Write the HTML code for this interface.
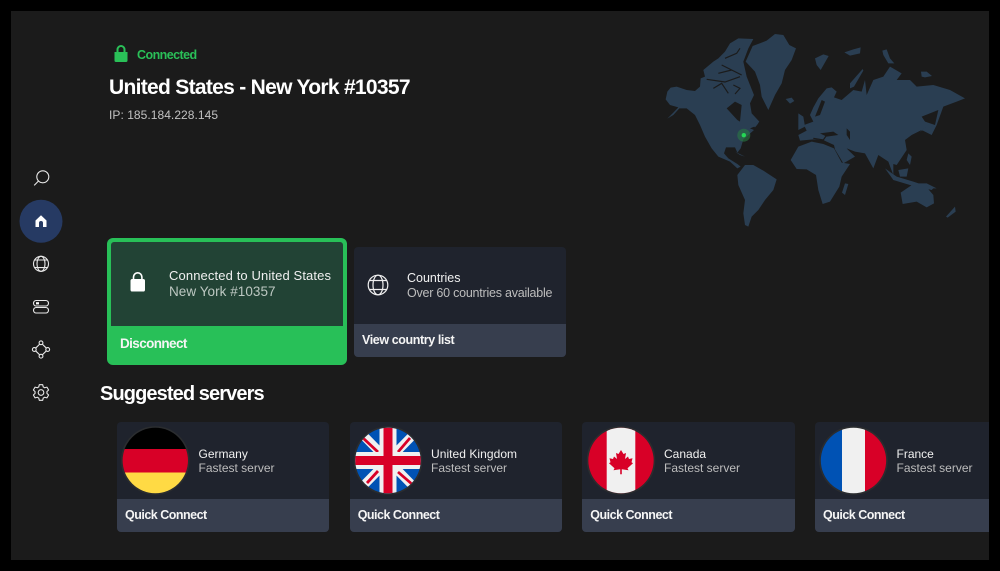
<!DOCTYPE html>
<html><head><meta charset="utf-8"><style>
html,body{margin:0;padding:0;background:#000}
#f{position:relative;width:1000px;height:571px;overflow:hidden;background:#000;font-family:"Liberation Sans",sans-serif;color:#fff}
#b{position:absolute;left:11px;top:11px;width:978px;height:549px;background:#1b1b1b}
.t{position:absolute;white-space:nowrap;line-height:1}
.c{position:absolute;border-radius:4px;overflow:hidden;background:#1f232d}
.c i{position:absolute;left:0;right:0;bottom:0;height:33px;background:#373e4e}
.n{font-size:12px;color:#f0f0f0}
.s{font-size:12px;color:#bdbdbd}
.q{font-size:12.5px;font-weight:bold;color:#f5f5f5;letter-spacing:-.5px}
svg{position:absolute;left:0;top:0}
</style></head><body><div id="f"><div id="b"></div>

<svg width="1000" height="571" viewBox="0 0 1000 571">
<g transform="translate(650 20) scale(.33333)" fill="#2a3e52">
<path d="M47,238L52,215L62,203L80,200L110,210L135,213L150,200L152,175L165,170L160,150L190,125L205,115L225,95L240,70L265,55L310,57L295,85L280,125L290,170L300,195L312,225L300,250L305,280L328,305L318,318L300,325L312,330L295,345L280,358L272,385L262,398L255,382L228,382L222,400L235,415L262,432L272,440L262,445L240,425L205,410L185,385L165,350L150,315L135,285L110,265L88,265L70,285L52,296L70,278L85,262L60,255Z"/>
<path d="M287,125L308,78L350,62L375,42L400,45L418,75L438,85L425,120L405,150L395,190L375,225L355,270L335,230L330,195L315,155Z"/>
<path d="M407,237L425,233L433,243L420,251Z M495,115L520,103L536,108L512,150L500,135Z M583,97L610,88L632,82L630,100L600,107Z M697,92L710,88L720,115L733,130L715,130L700,105Z M813,155L830,155L846,168L825,172L815,170Z M600,190L638,147L640,152L612,200L600,205Z"/>
<path d="M262,465L285,435L310,435L340,452L380,478L370,510L345,540L325,570L305,590L295,620L285,615L280,580L285,540L265,495Z"/>
<path d="M422,420L445,380L485,365L520,372L552,385L575,428L600,432L575,470L568,500L540,545L518,552L505,510L498,465L470,448L440,447Z"/>
<path d="M445,345L470,332L462,315L490,305L480,285L490,262L505,235L530,205L545,202L560,215L552,232L575,240L610,210L635,215L645,180L650,225L670,180L700,170L720,140L755,160L740,180L780,180L800,200L850,195L900,210L945,235L920,245L880,260L860,315L845,345L815,330L785,345L765,360L770,390L740,435L730,432L730,465L715,425L685,405L670,445L645,400L615,395L590,385L615,410L580,430L555,388L552,375L530,365L520,360L490,358L450,362Z"/>
<path d="M585,490L595,492L585,525L576,518Z M752,518L790,492L820,490L850,525L852,550L830,562L800,545L758,552Z M888,590L915,560L917,575L893,593Z M445,280L460,290L465,320L445,330Z M862,265L870,285L845,320L810,335L835,315Z M705,445L740,470L790,485L850,505L845,510L780,495L730,480Z M745,450L775,445L770,470L750,470Z M800,490L830,490L860,505L830,505Z M775,400L785,410L780,435L770,420Z M255,395L285,410L270,405Z M305,312L325,310L315,322Z"/>
</g>
<g transform="translate(650 20) scale(.33333)" fill="#1b1b1b">
<path d="M230,265L255,245L275,255L270,305L262,300Z M815,290L865,270L855,315L825,305Z M510,340L550,335L565,345L530,350Z M590,325L600,335L600,360L590,345Z M515,240L525,245L510,285L495,290L505,265Z M590,385L615,405L600,395Z"/>
</g>
<g transform="translate(650 20) scale(.33333)" fill="none" stroke="#1b1b1b" stroke-width="3.500">
<path d="M170,178L225,186L270,170M215,135L275,165M250,195L270,205L255,222M190,205L215,190L235,220M225,115L260,100L270,85M205,160L245,150"/>
<path d="M490,355L520,360L530,345"/>
</g>
<circle cx="743.800" cy="135.200" r="6.500" fill="#2a7a45" opacity=".6"/><circle cx="743.800" cy="135.200" r="2.200" fill="#25d855"/>

<!-- status lock -->
<path d="M114.500 52h13v8.500a1.500 1.500 0 0 1-1.500 1.500h-10a1.500 1.500 0 0 1-1.500-1.500z" fill="#2ac058"/>
<path d="M117.500 52v-2.500a3.500 3.500 0 0 1 7 0V52" fill="none" stroke="#2ac058" stroke-width="2"/>

<!-- sidebar -->
<circle cx="41" cy="221.300" r="21.500" fill="#263a63"/>
<path d="M35.500 227v-6.500L41 215.200l5.500 5.300V227h-3.500v-4a2 2 0 0 0-4 0v4z" fill="#fff"/>
<g fill="none" stroke="#e8e8e8" stroke-width="1.100" stroke-linejoin="round">
<circle cx="42.800" cy="176.800" r="6"/><path d="M38.500 181L34.200 185.400"/>
<circle cx="41" cy="263.800" r="7.500"/><ellipse cx="41" cy="263.800" rx="4" ry="7.500"/><path d="M34.500 260h13M34.500 267.600h13"/>
<rect x="33.500" y="300.500" width="15" height="5.500" rx="2.700"/><rect x="33.500" y="307.500" width="15" height="5.500" rx="2.700"/>
<circle cx="41" cy="342.800" r="1.900"/><circle cx="41" cy="356.200" r="1.900"/><circle cx="34.300" cy="349.500" r="1.900"/><circle cx="47.700" cy="349.500" r="1.900"/>
<path d="M39.700 344.100L35.600 348.200M42.300 344.100L46.400 348.200M39.700 354.900L35.600 350.800M42.300 354.900L46.400 350.800"/>
<circle cx="41" cy="392.500" r="2.800"/>
<path d="M43.250 386.940L42.660 384.670H39.340L38.750 386.940L37.310 387.770L35.050 387.150L33.390 390.030L35.060 391.660V393.340L33.390 394.970L35.050 397.850L37.310 397.230L38.750 398.060L39.340 400.330H42.660L43.250 398.060L44.690 397.230L46.950 397.850L48.610 394.970L46.940 393.340V391.660L48.610 390.030L46.950 387.150L44.690 387.770Z"/>
</g>
<rect x="36" y="302.200" width="3" height="2.200" fill="#fff"/>
</svg>

<div class="t" style="left:137px;top:49px;font-size:12.500px;font-weight:bold;color:#2ac058;letter-spacing:-.55px">Connected</div>
<div class="t" style="left:109px;top:77px;font-size:21px;font-weight:bold;letter-spacing:-.7px">United States - New York #10357</div>
<div class="t" style="left:109px;top:109px;font-size:12px;color:#c2c2c2;letter-spacing:.05px">IP: 185.184.228.145</div>

<div style="position:absolute;left:107px;top:238px;width:240px;height:127px;background:#28c058;border-radius:6px"></div>
<div style="position:absolute;left:111px;top:242px;width:232px;height:84px;background:#224335;border-radius:3px 3px 0 0"></div>
<svg width="1000" height="571" viewBox="0 0 1000 571">
<rect x="130.500" y="279" width="14.500" height="12.500" rx="1.800" fill="#fff"/>
<path d="M133.500 279.500v-2.500a4.200 4.200 0 0 1 8.400 0v2.500" fill="none" stroke="#fff" stroke-width="1.600"/>
</svg>
<div class="t" style="left:169px;top:269px;font-size:13px;color:#f0f0f0;letter-spacing:.12px">Connected to United States</div>
<div class="t" style="left:169px;top:285px;font-size:13.500px;color:#bdc8c2;letter-spacing:.05px">New York #10357</div>
<div class="t" style="left:120px;top:337px;font-size:13.500px;font-weight:bold;color:#f5f5f5;letter-spacing:-.6px">Disconnect</div>

<div class="c" style="left:353.500px;top:246.500px;width:212.500px;height:110px"><i></i></div>
<svg width="1000" height="571" viewBox="0 0 1000 571"><g fill="none" stroke="#f0f0f0" stroke-width="1.200"><circle cx="378" cy="285" r="9.800"/><ellipse cx="378" cy="285" rx="5" ry="9.800"/><path d="M369.500 280.500h17M369.500 289.500h17"/></g></svg>
<div class="t" style="left:407px;top:272px;font-size:12.500px;color:#f0f0f0">Countries</div>
<div class="t" style="left:407px;top:287px;font-size:12.500px;color:#bdbdbd;letter-spacing:-.23px">Over 60 countries available</div>
<div class="t q" style="left:362px;top:334px;letter-spacing:-.4px">View country list</div>

<div class="t" style="left:100px;top:384px;font-size:20px;font-weight:bold;letter-spacing:-.9px">Suggested servers</div>

<div class="c" style="left:117px;top:421.500px;width:212px;height:110px"><i></i></div>
<div class="c" style="left:349.700px;top:421.500px;width:212px;height:110px"><i></i></div>
<div class="c" style="left:582.300px;top:421.500px;width:212.500px;height:110px"><i></i></div>
<div class="c" style="left:815px;top:421.500px;width:174px;height:110px;border-radius:4px 0 0 4px"><i></i></div>

<svg width="1000" height="571" viewBox="0 0 1000 571">
<defs>
<clipPath id="a"><circle cx="155.300" cy="460.500" r="32.700"/></clipPath>
<clipPath id="u"><circle cx="388" cy="460.500" r="32.700"/></clipPath>
<clipPath id="k"><circle cx="621" cy="460.500" r="32.700"/></clipPath>
<clipPath id="r"><circle cx="853.500" cy="460.500" r="32.700"/></clipPath>
</defs>
<g fill="none" stroke="#2b2d2f" stroke-width="1.500"><circle cx="155.300" cy="460.500" r="33.500"/><circle cx="388" cy="460.500" r="33.500"/><circle cx="621" cy="460.500" r="33.500"/><circle cx="853.500" cy="460.500" r="33.500"/></g>
<g clip-path="url(#a)"><rect x="120" y="425" width="70" height="24" fill="#000"/><rect x="120" y="449" width="70" height="23.500" fill="#d80027"/><rect x="120" y="472.500" width="70" height="24" fill="#ffda44"/></g>
<g clip-path="url(#u)"><rect x="354" y="426" width="68" height="68" fill="#0052b4"/>
<path d="M361 433L415 488M415 433L361 488" stroke="#f0f0f0" stroke-width="9"/>
<path d="M363 438L378 452M398 452L410 438M367 483L378 471M398 472L413 485" stroke="#d80027" stroke-width="2.800"/>
<path d="M388 426V495M354 460.500H422" stroke="#f0f0f0" stroke-width="17"/>
<path d="M388 426V495M354 460.500H422" stroke="#d80027" stroke-width="9"/></g>
<g clip-path="url(#k)"><rect x="588" y="426" width="66" height="70" fill="#d80027"/><rect x="606.700" y="426" width="28.600" height="70" fill="#f0f0f0"/>
<path d="M621 450l2.500 4 2.500-1-1 6 3-2.500 1 2.500 3.500-.7-1 4 1.500 1-5.500 5 1 2-6.700-1v5h-1.600v-5l-6.700 1 1-2-5.500-5 1.500-1-1-4 3.500.7 1-2.500 3 2.500-1-6 2.500 1z" fill="#d80027"/></g>
<g clip-path="url(#r)"><rect x="820" y="426" width="22" height="70" fill="#0052b4"/><rect x="842" y="426" width="23" height="70" fill="#f0f0f0"/><rect x="865" y="426" width="24" height="70" fill="#d80027"/></g>
</svg>

<div class="t n" style="left:198.500px;top:448px">Germany</div><div class="t s" style="left:198.500px;top:462px">Fastest server</div><div class="t q" style="left:125px;top:509px">Quick Connect</div>
<div class="t n" style="left:431px;top:448px;letter-spacing:.05px">United Kingdom</div><div class="t s" style="left:431px;top:462px">Fastest server</div><div class="t q" style="left:357.700px;top:509px">Quick Connect</div>
<div class="t n" style="left:664px;top:448px">Canada</div><div class="t s" style="left:664px;top:462px">Fastest server</div><div class="t q" style="left:590.300px;top:509px">Quick Connect</div>
<div class="t n" style="left:896.500px;top:448px">France</div><div class="t s" style="left:896.500px;top:462px">Fastest server</div><div class="t q" style="left:823px;top:509px">Quick Connect</div>
</div></body></html>
